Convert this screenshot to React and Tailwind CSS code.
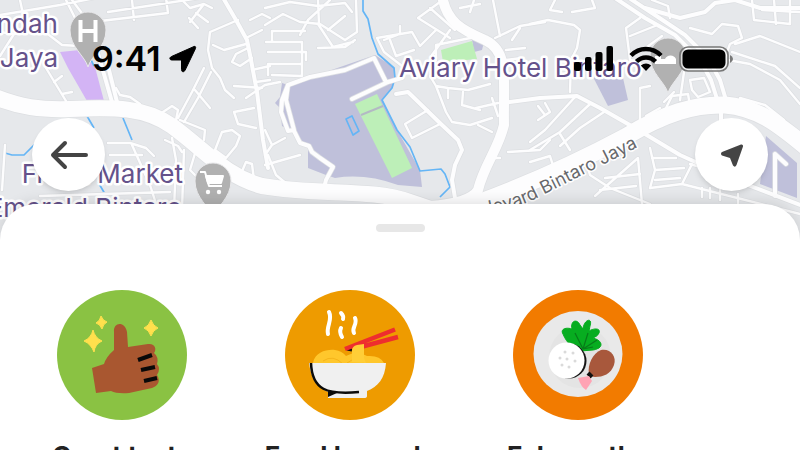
const minorRoads = [
  "M0 15L60 5L95 -2 M75 24L168 13L166 -2 M132 0L134 20 M108 12L200 -2 M14 34L26 28L20 0 M0 56L14 34L40 28L62 45L80 46 M66 0L76 20 M72 0L84 16 M0 32L14 34",
  "M46 68L66 101 M54 82L62 76 M62 94L72 92 M116 88L120 95L130 97L140 104",
  "M189 18L198 28 M190 22L204 4L212 8 M196 13L208 22 M182 0L190 8L204 4",
  "M238 20L210 32L208 50L212 68L220 78L225 90L234 98 M213 45L224 50L246 44 M204 68L192 92L178 118 M211 72L198 98L184 122 M195 90L210 108",
  "M248 48L236 54L232 62L240 66L252 58 M234 86L262 88 M252 70L270 66 M256 82L270 80 M250 20L262 14L270 18 M246 38L262 30",
  "M163 112L172 106L178 110L176 120 M180 120L205 130L204 140 M254 108L234 112L238 124L256 128 M222 132L232 130L240 136L236 146L226 158L215 150Z M240 176L246 162L252 164L254 180",
  "M108 143L130 143L146 148L154 156 M110 155L142 155 M132 145L150 185L158 210 M165 140L178 146L182 152 M172 138L176 160L174 210 M184 150L182 210 M5 145L2 190 M40 196L170 192 M196 150L190 170L200 180",
  "M265 25L283 14L300 22L320 24L345 40L357 32L356 0 M265 8L290 2L318 6L345 3L352 12 M319 24L318 0 M300 35L308 20L330 0 M318 24L333 47L353 42 M318 48L345 47L355 40 M328 30L345 16",
  "M272 75L302 76L302 42L266 42 M272 31L305 31 M272 31L272 42 M268 52L306 52L306 60 M268 64L302 64L302 52 M268 64L268 75",
  "M265 130L272 145L265 155 M272 145L285 138 M265 165L300 155 M268 155L276 175L288 185 M246 98L265 85L280 82",
  "M377 38L412 32L420 46L436 30 M377 38L384 52L402 66 M384 40L400 34L400 26 M390 40L396 56L414 50 M418 18L450 38 M418 18L440 2 M430 8L455 30 M432 55L450 30 M436 60L436 45L475 37L492 42",
  "M500 36L493 0 M495 38L520 26L545 22 M512 40L520 28 M460 8L480 4 M474 0L470 12",
  "M430 76L436 86L448 88L448 98 M436 86L446 112L452 122L470 125L492 118 M463 92L462 105L480 110 M448 88L468 90L490 84 M476 108L498 103 M492 98L498 116",
  "M428 110L405 124L412 138L440 124 M478 125L492 132 M490 158L500 158 M506 50L525 48 M506 60L522 58 M508 152L540 150L550 140",
  "M530 24L548 20L574 25L580 30L577 48L571 60L570 92 M555 0L550 10L562 12 M572 12L595 8L592 0",
  "M640 18L626 28L630 60L640 62 M630 36L655 26 M640 52L662 36 M652 0L668 6L670 18",
  "M690 28L712 34L722 24L738 26L742 38L730 44L724 60 M735 44L760 36L800 52 M728 60L750 64L780 80L800 104 M732 52L775 66L800 88 M752 0L754 20L790 24L790 0 M762 10L800 12 M774 0L776 24",
  "M690 80L704 78L710 92L698 97L692 90Z M664 112L672 96L688 94L690 106 M680 100L684 72 M674 92L664 102 M740 98L765 105L784 120",
  "M575 97L545 130L530 142 M545 103L550 112L538 120 M590 104L560 132L530 150 M604 112L580 128L560 146 M560 134L570 150 M538 106L545 115",
  "M530 162L550 156L555 172 M585 158L590 175L610 188L650 204 M595 196L638 158L642 204 M605 178L640 174 M600 190L636 186",
  "M650 148L655 170L650 188 M652 158L676 158 M655 170L684 168 M655 180L680 178 M640 126L640 88L650 86 M662 126L668 110 M646 116L660 108",
  "M692 164L682 184L800 214 M690 164L704 168 M702 188V197 M710 188V198 M720 190V200 M738 194V208 M650 188L682 184",
];

const mediumRoads = [
  "M222 -4L236 20L247 40L251 60L257 92L263 140L268 168",
  "M97 50L112 102 M107 62L117 102",
  "M288 85L310 77L345 70L374 58L386 82 M352 99L388 82L402 78",
  "M288 85L286 100L294 130L288 131L281 112L282 100L288 85 M294 131L300 143L309 146L312 152L320 158L333 167L326 180L324 188",
  "M396 94L408 92L442 125L458 140L462 150L455 165L452 180L455 198",
  "M612 -4L645 18L675 35L700 60L711 80L718 102 M626 -4L655 15L685 35L708 58L720 80L726 100",
  "M645 8L680 18L705 12L715 3L735 0L760 8L800 8",
  "M502 103L540 98L577 96L600 108L635 128L680 155L740 182L800 205",
  "M721 110V125 M775 154V196 M775 154L786 164",
];

const majorRoads = [
  { d: "M-5 97C20 107 40 110 70 109C115 107 145 107 172 126C205 150 225 176 262 186C320 196 370 188 410 202C425 207 440 212 450 216", w: 16 },
  { d: "M442 -5C446 22 462 30 485 40C510 52 503 80 504 125C498 150 484 165 478 190C472 200 455 204 430 206", w: 10 },
  { d: "M430 220C490 200 560 172 625 137C665 113 695 104 725 105C760 108 780 126 805 146", w: 17 },
];

const roads = [
  ...minorRoads.map((d) => ({ d, w: 2.4 })),
  ...mediumRoads.map((d) => ({ d, w: 4 })),
  ...majorRoads,
];

const Pin = ({ x, y, children }) => (
  <g transform={`translate(${x} ${y})`}>
    <path
      d="M0 37C-3 26 -18 17 -18 0A18 18 0 0 1 18 0C18 17 3 26 0 37Z"
      fill="#b1b1b1"
      stroke="#e9e9eb"
      strokeWidth="1"
    />
    {children}
  </g>
);

const CityMap = () => (
  <svg
    viewBox="0 0 800 250"
    preserveAspectRatio="xMidYMin slice"
    className="absolute inset-x-0 top-0 h-[250px] w-full bg-[#e6e8eb]"
  >
    <g fill="#bfc0da">
      <path d="M282 83L288 85L375 55L395 68L393 87L382 100L397 130L420 170L422 187L398 185Q365 173 335 178L326 175L308 168V147L295 133L282 126L280 108L275 103L280 97Z" />
      <path d="M472 40L484 42L482 50L474 52Z" />
      <path d="M592 75L623 78L628 100L608 106Z" />
      <path d="M766 136L797 163V198L760 184Z" />
    </g>
    <path d="M60 52L80 50L95 67L104 101H87L68 68Z" fill="#d3b4f5" />
    <g fill="#bdefb8">
      <path d="M355 104L377 94L412 168L392 178Z" />
      <path d="M441 50L472 41L477 59L443 62Z" />
    </g>
    <path d="M361 115L383 106" stroke="#b3b9c4" strokeWidth="2" />
    <g fill="none" stroke="#64b5f6" strokeWidth="1.7" strokeLinejoin="round">
      <path d="M363 -2L363 11L368 19L372 38L378 54L394 68L395 78L392 88L382 100L397 130L410 147L420 171L441 169L445 174L450 187L440 197" />
      <path d="M346 119L352 116L359 131L353 135Z" />
      <path d="M5 153L12 155H24L36 143 M87 116L94 128 M123 118L132 140 M98 182L105 194 M91 60L94 66" />
    </g>
    <g fill="none" strokeLinecap="round" strokeLinejoin="round">
      {roads.map(({ d, w }) => (
        <path key={d} d={d} stroke="#dddfe2" strokeWidth={w + 1.4} />
      ))}
      {roads.map(({ d, w }) => (
        <path key={d} d={d} stroke="#fdfdfe" strokeWidth={w} />
      ))}
    </g>

    <Pin x={88} y={30}>
      <path d="M-7.500 -10V12M7.500 -10V12M-7 1H7" stroke="#fff" strokeWidth="4" />
    </Pin>
    <Pin x={213} y={181}>
      <g fill="none" stroke="#fff" strokeWidth="2" strokeLinejoin="round">
        <path d="M-13 -9H-8L-4 5H9" />
        <path d="M-7 -5H10L8 2H-5Z" fill="#fff" />
      </g>
      <circle cx="-5" cy="11" r="2.200" fill="#fff" />
      <circle cx="6" cy="11" r="2.200" fill="#fff" />
    </Pin>
    <Pin x={668} y={56}>
      <path d="M-13 8V0H-7V3H-3A6 6 0 0 1 8 3V8Z" fill="#fff" />
    </Pin>

    <path id="boulevard" d="M440 224C480 215 510 211 533 200L638 147" fill="none" />
    <g
      fontFamily="Inter, sans-serif"
      stroke="#fff"
      strokeLinejoin="round"
      style={{ paintOrder: "stroke" }}
    >
      <g fontSize="26" fill="#65528b" strokeWidth="5">
        <text x="58" y="33" textAnchor="end">Indah</text>
        <text x="58" y="67" textAnchor="end">Jaya</text>
        <text x="399" y="77">Aviary Hotel Bintaro</text>
        <text x="183" y="183" textAnchor="end">Fresh Market</text>
        <text x="182" y="217" textAnchor="end">Emerald Bintaro</text>
      </g>
      <text fontSize="18" fill="#68696c" strokeWidth="3" textAnchor="end">
        <textPath href="#boulevard" startOffset="100%">Boulevard Bintaro Jaya</textPath>
      </text>
    </g>
  </svg>
);

const StatusBar = () => (
  <div className="flex h-[118px] items-center justify-between pr-[67px] pl-[92px]">
    <div className="flex items-center gap-2 text-black">
      <span className="text-[34px] leading-10 font-semibold">9:41</span>
      <svg viewBox="0 0 28 28" className="size-7">
        <path
          d="M25 1.500L2.500 11.500C0 12.700 .500 15 3 15H12.500V24.500C12.500 27.300 15 27.500 16.200 25L26.500 3.500C27 2 26.300 1 25 1.500Z"
          fill="currentColor"
          stroke="currentColor"
        />
      </svg>
    </div>
    <div className="flex items-center gap-4 text-black">
      <svg viewBox="0 0 39 26" className="h-[26px] w-[39px]" fill="currentColor">
        <rect x="0" y="16" width="7" height="9" rx="2" />
        <rect x="11" y="11" width="6.500" height="14" rx="2" />
        <rect x="21.500" y="6" width="7" height="19" rx="2" />
        <rect x="32.500" y="0" width="6.500" height="25" rx="2" />
      </svg>
      <svg viewBox="0 0 34 26" className="h-[26px] w-[34px]">
        <g fill="none" stroke="currentColor" strokeWidth="4.500">
          <path d="M2 9.500C10.500 .800 23.500 .800 32 9.500" />
          <path d="M7.500 15.500C13 10 21 10 26.500 15.500" />
        </g>
        <path d="M11.800 19.500Q17 15.500 22.200 19.500L17 25Z" fill="currentColor" />
      </svg>
      <svg viewBox="0 0 54 26" className="h-[26px] w-[54px]">
        <rect x="1" y="1" width="48" height="24" rx="8" fill="#fff" fillOpacity=".5" stroke="#777" strokeWidth="1.700" />
        <rect x="3.500" y="3.500" width="43" height="19" rx="5.500" fill="currentColor" />
        <path d="M51 9Q54 10.500 54 13T51 17Z" fill="#777" />
      </svg>
    </div>
  </div>
);

const RoundButton = ({ label, children }) => (
  <button
    type="button"
    aria-label={label}
    className="flex size-[73px] items-center justify-center rounded-full bg-white text-[#444] shadow-md"
  >
    {children}
  </button>
);

const ThumbArt = () => (
  <>
    <circle cx="65" cy="65" r="65" fill="#8ac243" />
    <g fill="#ffe04d">
      <path d="M36 40Q38 48 45 51Q38 54 37 62Q34 54 27 51Q34 48 36 40Z" stroke="#ffe04d" />
      <path d="M44 26Q46 31 50 32Q46 34 45 39Q43 34 39 33Q43 31 44 26Z" stroke="#ffe04d" />
      <path d="M94 30Q96 36 101 38Q96 40 94 46Q92 40 87 38Q92 36 94 30Z" stroke="#ffe04d" />
    </g>
    <path
      d="M35 78L47 74Q49 67 57 60V42C56 32 68 31 70 42L71 57L91 54C98 53 100 59 97 63Q102 67 100 74Q104 79 100 85C104 91 101 96 95 98L72 103Q60 104 54 101L39 103Z"
      fill="#a95730"
    />
    <path d="M81 70L95 65M84 80L98 77M87 91L100 88" stroke="#090909" strokeWidth="4" />
  </>
);

const NoodleArt = () => (
  <>
    <circle cx="65" cy="65" r="65" fill="#ee9b00" />
    <g fill="none" stroke="#fff" strokeWidth="4" strokeLinecap="round">
      <path d="M44 22C48 30 41 36 43 44" />
      <path d="M56 23Q59 26 58 29M56 38Q54 42 57 47" />
      <path d="M70 28C73 34 66 38 69 43" />
    </g>
    <path d="M28 73C30 62 42 59 50 60Q57 61 61 66Q72 60 82 66Q95 65 99 73V76H28Z" fill="#ffc72c" />
    <path d="M38 71Q48 64 58 74M62 73Q71 66 79 73" fill="none" stroke="#f6b51b" strokeWidth="1" />
    <path d="M62 59L67 60" stroke="#111" strokeWidth="3" />
    <path d="M60 59L110 39.500M72 58L113 47" stroke="#ee2e2e" strokeWidth="4.500" />
    <path d="M67 72V61Q67 56 72 55L79 54V68L81 73Z" fill="#ffce37" />
    <path d="M24 73H101C100 88 93 97 82 101V106Q82 108 79 108H43V102C31 96 26 88 24 73Z" fill="#f0f0f0" />
    <path d="M43 101L52 103L43 107Z" fill="#0b0b0b" />
    <path d="M26 73C27 100 42 105 74 102" fill="none" stroke="#0b0b0b" strokeWidth="2.500" />
  </>
);

const PlateArt = () => (
  <>
    <circle cx="65" cy="65" r="65" fill="#f27b00" />
    <ellipse cx="65" cy="64" rx="44.500" ry="43" fill="#e9e9e9" />
    <circle cx="67" cy="67" r="31" fill="#e4e4e4" />
    <path
      d="M69 61C61 59 54 54 50 44C47 39 53 37 59 39C57 31 64 28 67 35L70 39C71 29 80 27 77 36L76 41C81 38 88 38 86 43Q85 46 80 48C88 50 90 55 86 58Q82 60 80 60L67 61Z"
      fill="#07ad20"
      stroke="#07ad20"
    />
    <path d="M70 59L62 43M70 59L75 43M70 59L84 50M70 59L80 57" stroke="#087b19" strokeWidth="1.200" fill="none" />
    <circle cx="56" cy="71" r="17.500" fill="#151515" />
    <circle cx="53.500" cy="70.500" r="18" fill="#fff" />
    <g fill="#dadada">
      {[[52, 62], [60, 63], [47, 68], [54, 69], [62, 71], [49, 75], [56, 77]].map(([cx, cy]) => (
        <circle key={cx} cx={cx} cy={cy} r="1.500" />
      ))}
    </g>
    <path d="M76 84C74 75 80 63 88 60C97 58 104 66 101 75C98 84 90 87 82 87Q78 87 76 84Z" fill="#a8583c" />
    <path d="M75 83L79 87" stroke="#111" strokeWidth="4" />
    <path d="M65 88L76 86L79 91L73 100Q68 97 65 88Z" fill="#ffa3b4" />
  </>
);

const categories = [
  { name: "Great taste", Art: ThumbArt },
  { name: "Food legends", Art: NoodleArt },
  { name: "Fab worthy", Art: PlateArt },
];

export default function App() {
  return (
    <div className="relative flex h-screen flex-col overflow-hidden font-['Inter',sans-serif]">
      <CityMap />
      <header className="relative h-[204px] shrink-0">
        <StatusBar />
        <nav className="flex justify-between px-8">
          <RoundButton label="Back">
            <svg viewBox="0 0 38 30" className="h-[30px] w-[38px]">
              <path
                d="M36 15H3M15 3L3 15L15 27"
                fill="none"
                stroke="currentColor"
                strokeWidth="4"
                strokeLinecap="round"
                strokeLinejoin="round"
              />
            </svg>
          </RoundButton>
          <RoundButton label="My location">
            <svg viewBox="0 0 24 24" className="size-6">
              <path
                d="M21 1.500L2 9Q0 10.500 2 12.500L10 15L13 22.500Q15 25 16.500 22L23 3.500Q23.300 1 21 1.500Z"
                fill="currentColor"
              />
            </svg>
          </RoundButton>
        </nav>
      </header>

      <main className="relative flex-1 rounded-t-[36px] bg-white pt-5 shadow-[0_-2px_14px_rgba(0,0,0,0.12)]">
        <div className="mx-auto h-2 w-[49px] rounded-full bg-[#e7e7e7]" />
        <ul className="mt-[58px] flex pl-2">
          {categories.map(({ name, Art }) => (
            <li key={name} className="w-[228px] shrink-0">
              <a href="#" className="flex flex-col items-center gap-5">
                <svg viewBox="0 0 130 130" className="size-[130px]">
                  <Art />
                </svg>
                <span className="text-[26px] leading-8 font-bold whitespace-nowrap text-[#222]">{name}</span>
              </a>
            </li>
          ))}
        </ul>
      </main>
    </div>
  );
}
